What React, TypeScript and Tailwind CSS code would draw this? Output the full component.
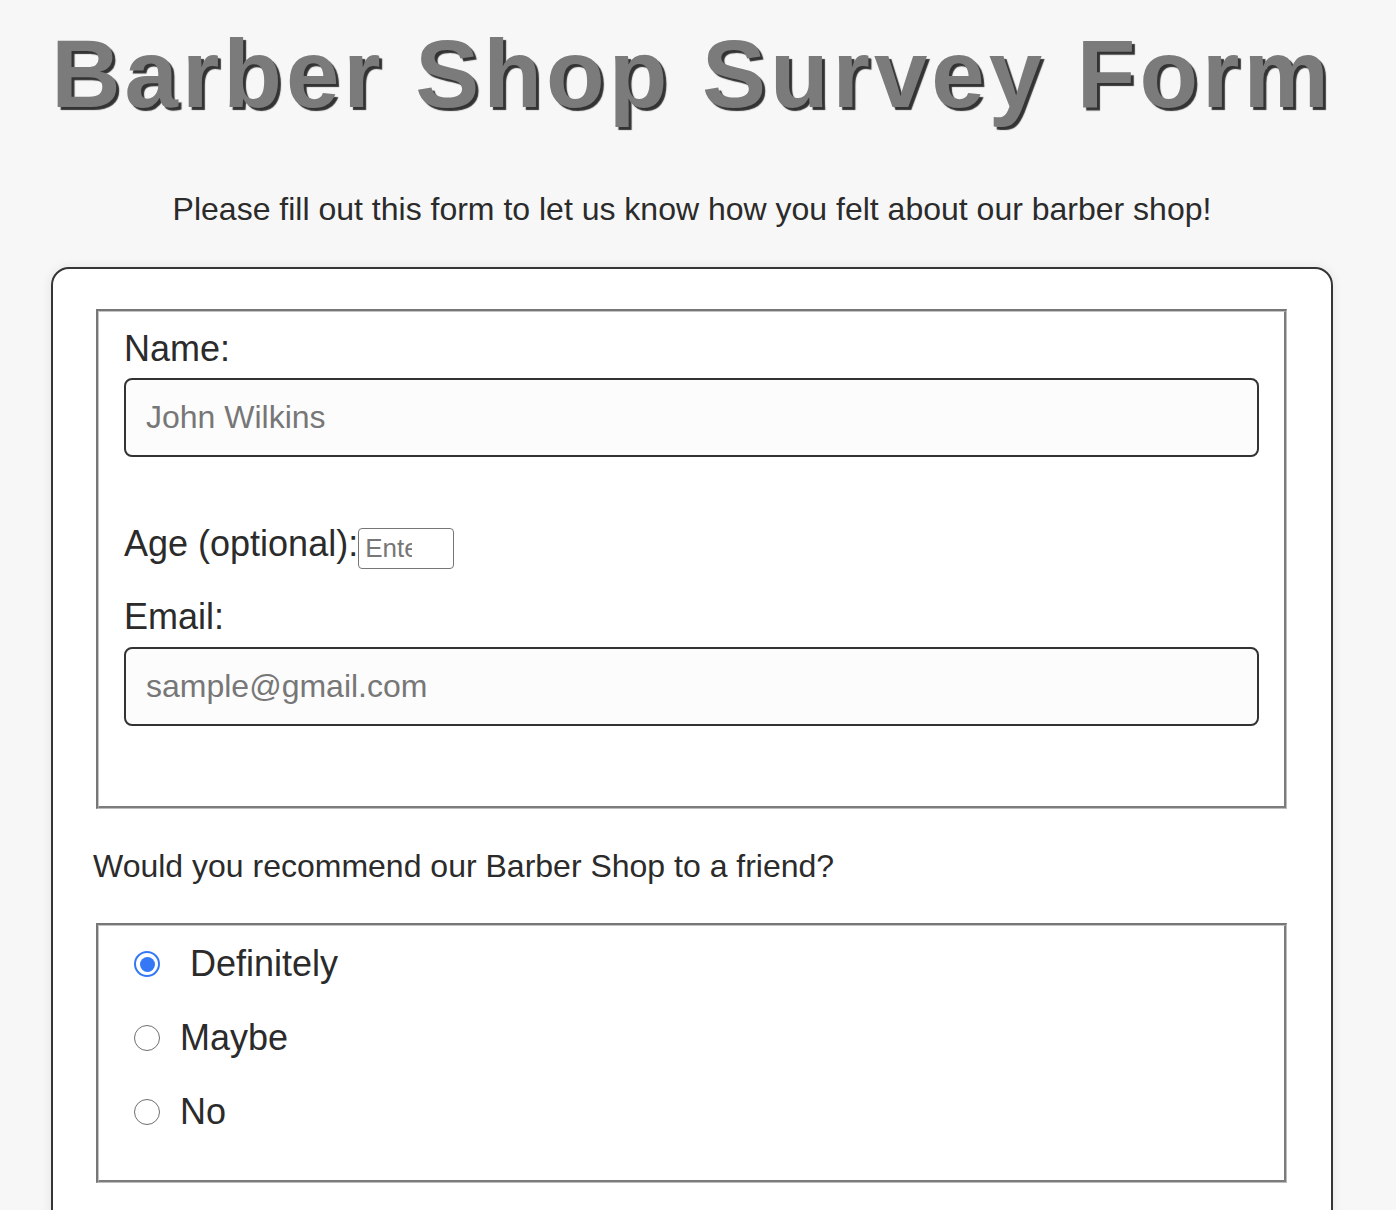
import React from "react";

function Groove({ children, className }: { children: React.ReactNode; className?: string }) {
  return (
    <div className="border-t-2 border-l-2 border-b border-r border-t-[#777777] border-l-[#777777] border-b-[#bdbdbd] border-r-[#bdbdbd]">
      <div className={"border-t border-l border-b-2 border-r-2 border-t-[#c4c4c4] border-l-[#c4c4c4] border-b-[#7c7c7c] border-r-[#7c7c7c] " + (className ?? "")}>
        {children}
      </div>
    </div>
  );
}

function Radio({ checked }: { checked?: boolean }) {
  if (checked) {
    return (
      <span className="flex h-[26px] w-[26px] shrink-0 items-center justify-center rounded-full border-2 border-[#3478f6] bg-white">
        <span className="h-[15px] w-[15px] rounded-full bg-[#3478f6]" />
      </span>
    );
  }
  return <span className="h-[26px] w-[26px] shrink-0 rounded-full border-[1.5px] border-[#6f6f6f] bg-white" />;
}

export default function App() {
  return (
    <div className="min-h-[1210px] w-full bg-[#f7f7f7] font-['Liberation_Sans',Arial,sans-serif] text-[#2b2b2b]">
      <div className="flex w-[1384px] flex-col items-center">
        <h1 className="mt-[19px] text-[96px] font-bold leading-[110px] tracking-[4px] text-[#7b7b7b] [text-shadow:3px_3px_1px_#333333]">
          Barber Shop Survey Form
        </h1>
        <p className="mt-[62px] text-[32px] leading-[37px]">
          Please fill out this form to let us know how you felt about our barber shop!
        </p>
        <form className="mt-[39px] w-[1282px] rounded-[18px] border-2 border-[#353535] bg-white pt-[40px] pl-[40px] pr-[40px] pb-[60px] shadow-[0_0_12px_rgba(0,0,0,0.08)]">
          <div className="ml-[3px] mr-[4px]">
            <Groove className="px-[25px] pt-[17px] pb-[80px]">
              <label className="block text-[36px] leading-[40px]" htmlFor="name">Name:</label>
              <input
                id="name"
                type="text"
                placeholder="John Wilkins"
                className="mt-[9px] block h-[79px] w-full rounded-[8px] border-2 border-[#333333] bg-[#fcfcfc] px-[20px] text-[32px] text-[#2b2b2b] outline-none placeholder:text-[#777777]"
              />
              <div className="mt-[67px] flex items-start">
                <label className="text-[36px] leading-[40px]" htmlFor="age">Age (optional):</label>
                <input
                  id="age"
                  type="number"
                  placeholder="Enter your age"
                  className="mt-[4px] h-[41px] w-[96px] rounded-[4px] border border-[#767676] bg-white pl-[6px] pr-[26px] text-[26px] outline-none placeholder:text-[#777777] [appearance:textfield]"
                />
              </div>
              <label className="mt-[28px] block text-[36px] leading-[40px]" htmlFor="email">Email:</label>
              <input
                id="email"
                type="email"
                placeholder="sample@gmail.com"
                className="mt-[10px] block h-[79px] w-full rounded-[8px] border-2 border-[#333333] bg-[#fcfcfc] px-[20px] text-[32px] text-[#2b2b2b] outline-none placeholder:text-[#777777]"
              />
            </Groove>
          </div>
          <p className="mt-[39px] text-[32px] leading-[37px]">Would you recommend our Barber Shop to a friend?</p>
          <div className="mt-[38px] ml-[3px] mr-[4px]">
            <Groove className="pt-[1px] pb-[31px] pl-[35px]">
              <div className="flex h-[74px] items-center">
                <Radio checked />
                <span className="ml-[30px] text-[36px] leading-[40px]">Definitely</span>
              </div>
              <div className="flex h-[74px] items-center">
                <Radio />
                <span className="ml-[20px] text-[36px] leading-[40px]">Maybe</span>
              </div>
              <div className="flex h-[74px] items-center">
                <Radio />
                <span className="ml-[20px] text-[36px] leading-[40px]">No</span>
              </div>
            </Groove>
          </div>
        </form>
      </div>
    </div>
  );
}
